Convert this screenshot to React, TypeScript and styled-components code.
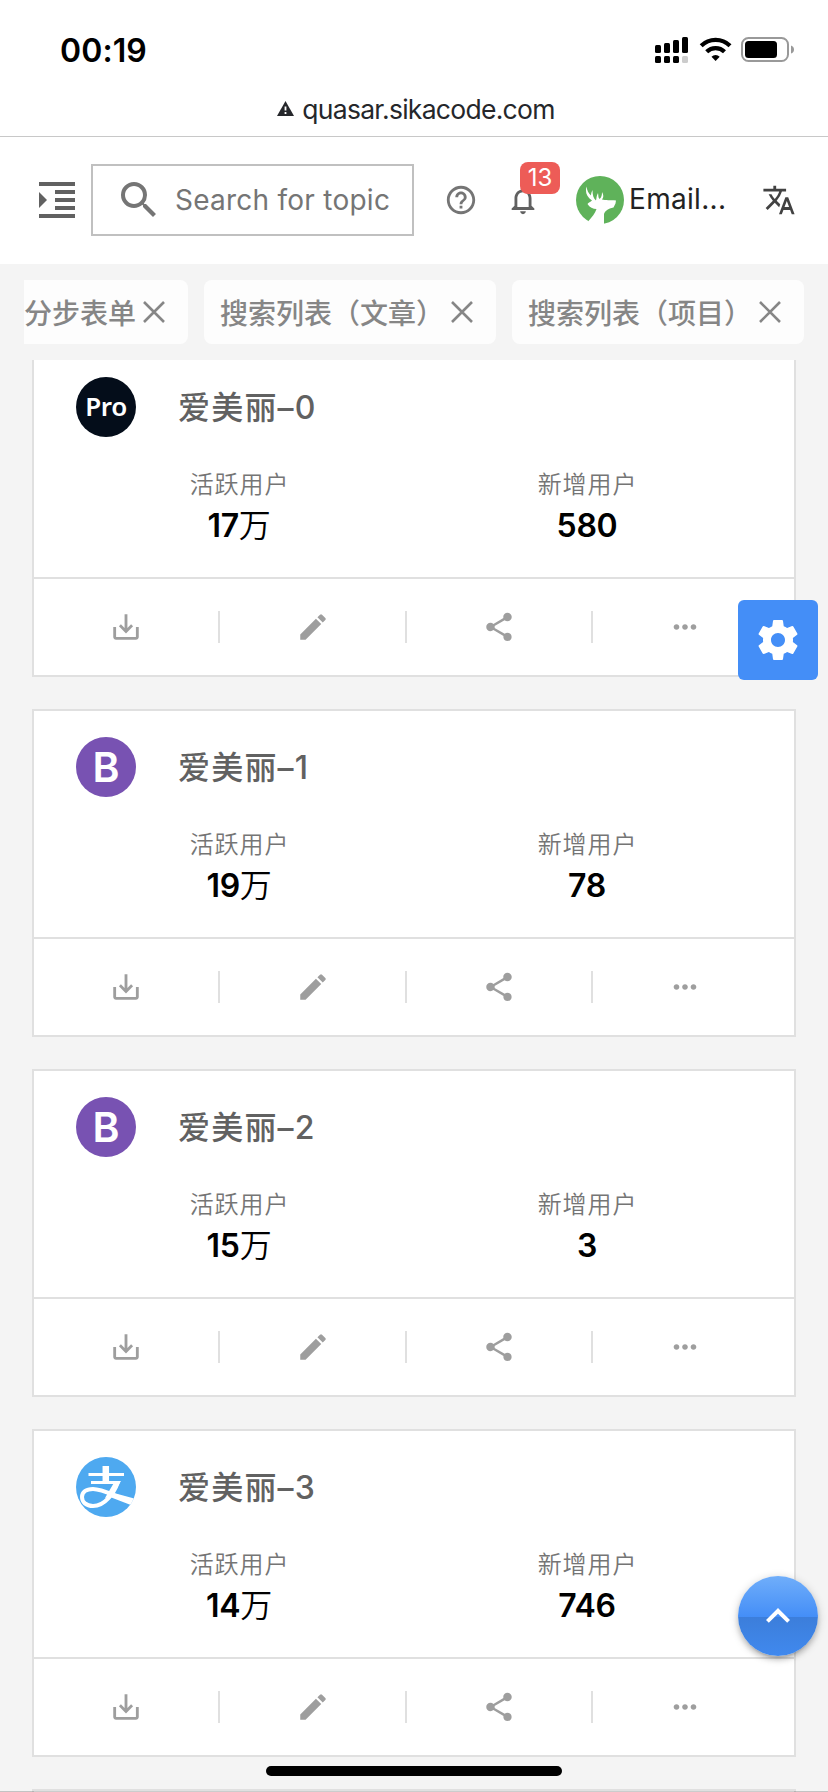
import React from "react";
import styled, { createGlobalStyle } from "styled-components";

const latin = `Inter, "Noto Sans CJK SC", sans-serif`;

const GlobalStyle = createGlobalStyle`
  * { box-sizing: border-box; }
  body { margin: 0; background: #f4f4f4; font-family: ${latin}; }
`;

const Screen = styled.div`
  position: relative;
  width: 828px;
  height: 1792px;
  overflow: hidden;
  display: flex;
  flex-direction: column;
  background: #f4f4f4;
`;

const BrowserTop = styled.header`
  flex: none;
  height: 137px;
  background: #fff;
  border-bottom: 1px solid #c8c8c8;
`;

const StatusBar = styled.div`
  height: 88px;
  display: flex;
  align-items: center;
  justify-content: space-between;
  padding: 12px 33px 0 60px;
`;

const Clock = styled.div`
  padding-top: 1px;
  font-size: 32px;
  line-height: 40px;
  font-weight: 600;
  letter-spacing: 0.1px;
`;

const StatusIcons = styled.svg`
  display: block;
  width: 140px;
  height: 26px;
`;

const Address = styled.div`
  height: 41px;
  display: flex;
  align-items: center;
  justify-content: center;
  gap: 8px;
  padding-left: 4px;
  color: #25272b;
  font-size: 26.5px;
  letter-spacing: -0.72px;
`;

const Toolbar = styled.nav`
  flex: none;
  height: 127px;
  display: flex;
  align-items: center;
  padding: 0 0 1px 33px;
  background: #fff;
`;

const Icon = styled.svg<{ $size: number; $color: string }>`
  display: block;
  flex: none;
  width: ${(p) => p.$size}px;
  height: ${(p) => p.$size}px;
  fill: ${(p) => p.$color};
`;

const SearchBox = styled.div`
  flex: none;
  width: 323px;
  height: 72px;
  margin-left: 10px;
  padding-left: 22px;
  display: flex;
  align-items: center;
  gap: 12px;
  border: 2px solid #c0c0c0;
  color: #757575;
  font-size: 28px;
  letter-spacing: 0.25px;
  white-space: nowrap;
`;

const HelpButton = styled.div`
  margin-left: 30px;
`;

const BellButton = styled.div`
  position: relative;
  margin-left: 28px;
`;

const Badge = styled.span`
  position: absolute;
  left: 14px;
  top: -21px;
  width: 40px;
  height: 32px;
  border-radius: 8px;
  background: #ed5c57;
  color: #fff;
  font-size: 24px;
  line-height: 32px;
  text-align: center;
`;

const Account = styled.div`
  display: flex;
  align-items: center;
  gap: 5px;
  width: 186px;
  margin-left: 36px;
  color: #222;
  font-size: 28px;
  letter-spacing: 0.3px;
`;

const AccountName = styled.span`
  padding-bottom: 2px;
`;

const TabStrip = styled.div`
  flex: none;
  height: 96px;
  margin: 0 24px;
  padding: 16px 0;
  display: flex;
  justify-content: flex-end;
  gap: 16px;
  overflow: hidden;
`;

const Tab = styled.div<{ $width: number; $cut?: boolean }>`
  flex: none;
  width: ${(p) => p.$width}px;
  display: flex;
  align-items: center;
  justify-content: space-between;
  padding: ${(p) => (p.$cut ? "0 17px 0 0" : "0 17px 0 16px")};
  border-radius: ${(p) => (p.$cut ? "0 8px 8px 0" : "8px")};
  background: #fdfdfd;
  color: #868686;
  font-size: 28px;
  line-height: 62px;
  font-weight: 500;
  font-family: "Noto Sans CJK SC", sans-serif;
  white-space: nowrap;
`;

const CardList = styled.main`
  flex: 1;
  min-height: 0;
  overflow: hidden;
  padding: 0 32px;
`;

const Cards = styled.div`
  display: flex;
  flex-direction: column;
  gap: 32px;
  margin-top: -11px;
`;

const Card = styled.article`
  flex: none;
  height: 328px;
  border: 2px solid #e0e0e0;
  background: #fff;
`;

const CardBody = styled.div`
  height: 228px;
  padding-top: 26px;
  border-bottom: 2px solid #e0e0e0;
`;

const CardHead = styled.div`
  display: flex;
  align-items: center;
  height: 60px;
  gap: 42px;
  padding-left: 42px;
`;

const Title = styled.h2`
  margin: 0;
  padding-top: 1px;
  color: #616161;
  font-size: 32px;
  line-height: 60px;
  font-weight: 550;
  letter-spacing: 1.2px;
`;

const Logo = styled.div<{ $bg: string }>`
  width: 60px;
  height: 60px;
  border-radius: 50%;
  overflow: hidden;
  background: ${(p) => p.$bg};
  color: #fff;
  line-height: 60px;
  text-align: center;
`;

const ProLogo = styled(Logo)`
  font-family: "Noto Sans", sans-serif;
  font-size: 26px;
  font-weight: 600;
  letter-spacing: -0.4px;
  line-height: 58px;
`;

const BootstrapLogo = styled(Logo)`
  font-size: 41px;
  font-weight: 600;
`;

const Stats = styled.div`
  display: grid;
  grid-template-columns: 1fr 1fr;
  padding: 30px 32px 0;
  text-align: center;
`;

const StatLabel = styled.div`
  color: #757575;
  font-size: 24px;
  line-height: 36px;
  font-weight: 350;
  letter-spacing: 0.9px;
  padding-right: 1px;
`;

const StatValue = styled.div`
  color: #000;
  font-size: 32px;
  line-height: 46px;
  font-weight: 600;
  letter-spacing: -0.3px;
  padding-right: 2px;
`;

const Unit = styled.span`
  font-weight: 350;
`;

const Actions = styled.div`
  display: flex;
  align-items: center;
  height: 96px;
`;

const Action = styled.div`
  flex: none;
  width: 186.4px;
  height: 32px;
  display: flex;
  align-items: center;
  justify-content: center;
  border-right: 2px solid #e0e0e0;
  &:last-child { border-right-color: transparent; }
`;

const SettingsButton = styled.button`
  position: absolute;
  left: 738px;
  top: 600px;
  width: 80px;
  height: 80px;
  display: flex;
  align-items: center;
  justify-content: center;
  border: 0;
  padding: 0;
  border-radius: 6px;
  background: #448ef7;
`;

const TopButton = styled.button`
  position: absolute;
  left: 738px;
  top: 1576px;
  width: 80px;
  height: 80px;
  display: flex;
  align-items: center;
  justify-content: center;
  border: 0;
  padding: 0;
  border-radius: 50%;
  background: linear-gradient(#70aefa 0, #448ef7 41px, #3c7edb 41px, #4089ee 80px);
  box-shadow: 0 2px 10px rgba(0, 0, 0, 0.2), 0 4px 5px rgba(0, 0, 0, 0.14), 0 6px 2px -4px rgba(0, 0, 0, 0.12);
`;

const HomeIndicator = styled.div`
  position: absolute;
  left: 266px;
  top: 1766px;
  width: 296px;
  height: 10px;
  border-radius: 5px;
  background: #000;
`;

const BottomEdge = styled.div`
  position: absolute;
  left: 0;
  right: 0;
  bottom: 0;
  height: 1px;
  background: rgba(0, 0, 0, 0.2);
`;

const paths = {
  indent: "M3 21h18v-2H3v2zM3 8v8l4-4-4-4zm8 9h10v-2H11v2zM3 3v2h18V3H3zm8 6h10V7H11v2zm0 4h10v-2H11v2z",
  search: "M15.5 14h-.79l-.28-.27A6.471 6.471 0 0 0 16 9.5 6.5 6.5 0 1 0 9.5 16c1.61 0 3.09-.59 4.23-1.57l.27.28v.79l5 4.99L20.49 19l-4.99-5zm-6 0C7.01 14 5 11.99 5 9.5S7.01 5 9.5 5 14 7.01 14 9.5 11.99 14 9.5 14z",
  help: "M11 18h2v-2h-2v2zm1-16C6.48 2 2 6.48 2 12s4.48 10 10 10 10-4.48 10-10S17.52 2 12 2zm0 18c-4.41 0-8-3.59-8-8s3.59-8 8-8 8 3.59 8 8-3.59 8-8 8zm0-14c-2.21 0-4 1.79-4 4h2c0-1.1.9-2 2-2s2 .9 2 2c0 2-3 1.75-3 5h2c0-2.25 3-2.5 3-5 0-2.21-1.79-4-4-4z",
  bell: "M12 22c1.1 0 2-.9 2-2h-4c0 1.1.9 2 2 2zm6-6v-5c0-3.07-1.63-5.64-4.5-6.32V4c0-.83-.67-1.5-1.5-1.5s-1.5.67-1.5 1.5v.68C7.64 5.36 6 7.92 6 11v5l-2 2v1h16v-1l-2-2zm-2 1H8v-6c0-2.48 1.51-4.5 4-4.5s4 2.02 4 4.5v6z",
  translate: "M12.87 15.07l-2.54-2.51.03-.03A17.52 17.52 0 0 0 14.07 6H17V4h-7V2H8v2H1v1.99h11.17C11.5 7.92 10.44 9.75 9 11.35 8.07 10.32 7.3 9.19 6.69 8h-2c.73 1.63 1.73 3.17 2.98 4.56l-5.09 5.02L4 19l5-5 3.11 3.11.76-2.04zM18.5 10h-2L12 22h2l1.12-3h4.75L21 22h2l-4.5-12zm-2.62 7l1.62-4.33L19.12 17h-3.24z",
  download: "M19 12v7H5v-7H3v7c0 1.1.9 2 2 2h14c1.1 0 2-.9 2-2v-7h-2zm-6 .67l2.59-2.58L17 11.5l-5 5-5-5 1.41-1.41L11 12.67V3h2z",
  edit: "M3 17.25V21h3.75L17.81 9.94l-3.75-3.75L3 17.25zM20.71 7.04a.996.996 0 0 0 0-1.41l-2.34-2.34a.996.996 0 0 0-1.41 0l-1.83 1.83 3.75 3.75 1.83-1.83z",
  share: "M18 16.08c-.76 0-1.44.3-1.96.77L8.91 12.7c.05-.23.09-.46.09-.7s-.04-.47-.09-.7l7.05-4.11c.54.5 1.25.81 2.04.81 1.66 0 3-1.34 3-3s-1.34-3-3-3-3 1.34-3 3c0 .24.04.47.09.7L8.04 9.81C7.5 9.31 6.79 9 6 9c-1.66 0-3 1.34-3 3s1.34 3 3 3c.79 0 1.5-.31 2.04-.81l7.12 4.16c-.05.21-.08.43-.08.65 0 1.61 1.31 2.92 2.92 2.92s2.92-1.31 2.92-2.92-1.31-2.92-2.92-2.92z",
  more: "M6 10c-1.1 0-2 .9-2 2s.9 2 2 2 2-.9 2-2-.9-2-2-2zm12 0c-1.1 0-2 .9-2 2s.9 2 2 2 2-.9 2-2-.9-2-2-2zm-6 0c-1.1 0-2 .9-2 2s.9 2 2 2 2-.9 2-2-.9-2-2-2z",
  settings: "M19.43 12.98c.04-.32.07-.64.07-.98s-.03-.66-.07-.98l2.11-1.65c.19-.15.24-.42.12-.64l-2-3.46c-.12-.22-.39-.3-.61-.22l-2.49 1c-.52-.4-1.08-.73-1.69-.98l-.38-2.65C14.46 2.18 14.25 2 14 2h-4c-.25 0-.46.18-.49.42l-.38 2.65c-.61.25-1.17.59-1.69.98l-2.49-1c-.23-.09-.49 0-.61.22l-2 3.46c-.13.22-.07.49.12.64l2.11 1.65c-.04.32-.07.65-.07.98s.03.66.07.98l-2.11 1.65c-.19.15-.24.42-.12.64l2 3.46c.12.22.39.3.61.22l2.49-1c.52.4 1.08.73 1.69.98l.38 2.65c.03.24.24.42.49.42h4c.25 0 .46-.18.49-.42l.38-2.65c.61-.25 1.17-.59 1.69-.98l2.49 1c.23.09.49 0 .61-.22l2-3.46c.12-.22.07-.49-.12-.64l-2.11-1.65zM12 15.5c-1.93 0-3.5-1.57-3.5-3.5s1.57-3.5 3.5-3.5 3.5 1.57 3.5 3.5-1.57 3.5-3.5 3.5z",
  up: "M7.41 15.41L12 10.83l4.59 4.58L18 14l-6-6-6 6z",
};

const Glyph = ({ name, size = 34, color = "#9e9e9e" }: { name: keyof typeof paths; size?: number; color?: string }) => (
  <Icon viewBox="0 0 24 24" $size={size} $color={color}>
    <path d={paths[name]} />
  </Icon>
);

const Close = () => (
  <Icon viewBox="0 0 34 34" $size={34} $color="none">
    <path d="M7 7L27 27M27 7L7 27" stroke="#868686" strokeWidth="2.6" />
  </Icon>
);

const Deer = () => (
  <Icon viewBox="0 0 48 48" $size={48} $color="#5fb25a">
    <circle cx="24" cy="24" r="24" />
    <path
      fill="#fff"
      d="M10.500 10.500C9 16 10.500 21 16 24.500C14.500 26 12.500 26.500 11.500 28C13.500 31.500 17 33 20.500 33C19 37.500 16 41 12.500 45L14 49H28V38C29 35 32 32.500 37.500 31.500L39.500 27.500L40 24.500C35 24 29 24.500 26 23.500C28 21 27.500 18.500 26 16C26 19 25.500 21.500 23.500 23C22 21.500 22.500 19 22 17C20.500 19.500 20.500 22 20 24.500C17.500 22.500 16.500 19 16.500 14C15.500 16 15 17.500 15 19.500C12.500 17.500 11 14.500 10.500 10.500Z"
    />
  </Icon>
);

const Alipay = () => (
  <Icon viewBox="0 0 60 60" $size={60} $color="none">
    <g stroke="#fff">
      <path d="M12.500 17.500H48" strokeWidth="2.800" />
      <path d="M29.800 9V25" strokeWidth="6.500" />
      <path d="M15 25.500H43" strokeWidth="3" />
      <path d="M42 25C38 36 29 49 17 49C10 49 6 45 6 40C6 35 10 32 17 32C27 32 38 39 56 45" strokeWidth="4" />
    </g>
    <path fill="#fff" d="M39 24H45L38 36L60 42V50L34 40L29 41Z" />
  </Icon>
);

type LogoKind = "pro" | "bootstrap" | "alipay";

const CardLogo = ({ kind }: { kind: LogoKind }) => {
  if (kind === "pro") return <ProLogo $bg="#040d1a">Pro</ProLogo>;
  if (kind === "bootstrap") return <BootstrapLogo $bg="#7852b2">B</BootstrapLogo>;
  return <Logo $bg="#4ea9f0"><Alipay /></Logo>;
};

const items: { logo: LogoKind; active: number; added: number }[] = [
  { logo: "pro", active: 17, added: 580 },
  { logo: "bootstrap", active: 19, added: 78 },
  { logo: "bootstrap", active: 15, added: 3 },
  { logo: "alipay", active: 14, added: 746 },
];

const actionIcons: (keyof typeof paths)[] = ["download", "edit", "share", "more"];

export default function App() {
  return (
    <Screen>
      <GlobalStyle />
      <BrowserTop>
        <StatusBar>
          <Clock>00:19</Clock>
          <StatusIcons viewBox="0 0 140 26">
            <rect x="0" y="8" width="6" height="8" rx="1.500" />
            <rect x="9" y="6" width="6" height="10" rx="1.500" />
            <rect x="18" y="3" width="6" height="13" rx="1.500" />
            <rect x="27" y="0" width="6" height="16" rx="1.500" />
            <rect x="0" y="19" width="6" height="7" rx="1.500" />
            <rect x="9" y="19" width="6" height="7" rx="1.500" />
            <rect x="18" y="19" width="6" height="7" rx="1.500" />
            <rect x="27" y="19" width="6" height="7" rx="1.500" fill="#ccc" />
            <g fill="none" stroke="#000" strokeWidth="4.200">
              <path d="M46.200 8.800A20.500 20.500 0 0 1 75 8.800" />
              <path d="M51.700 14.800A12.600 12.600 0 0 1 69.500 14.800" />
            </g>
            <path d="M60.600 24L56.500 19.800A5.800 5.800 0 0 1 64.700 19.800Z" />
            <rect x="87" y="1" width="46" height="23" rx="6.500" fill="none" stroke="#999" strokeWidth="2" />
            <rect x="90" y="4" width="32" height="17" rx="3.500" />
            <path d="M136 8.500Q139 9.500 139 12.500T136 16.500Z" fill="#999" />
          </StatusIcons>
        </StatusBar>
        <Address>
          <svg width="17" height="15" viewBox="0 0 17 15">
            <path d="M8.500 0L17 15H0Z" fill="#25272b" />
            <path d="M8.500 5.500V9.500M8.500 11V13" stroke="#fff" strokeWidth="1.800" />
          </svg>
          <span>quasar.sikacode.com</span>
        </Address>
      </BrowserTop>

      <Toolbar>
        <Glyph name="indent" size={48} color="#616161" />
        <SearchBox>
          <Glyph name="search" size={48} color="#757575" />
          <span>Search for topic</span>
        </SearchBox>
        <HelpButton><Glyph name="help" color="#757575" /></HelpButton>
        <BellButton>
          <Glyph name="bell" color="#616161" />
          <Badge>13</Badge>
        </BellButton>
        <Account>
          <Deer />
          <AccountName>Email...</AccountName>
        </Account>
        <Glyph name="translate" color="#424242" />
      </Toolbar>

      <TabStrip>
        <Tab $width={164} $cut><span>分步表单</span><Close /></Tab>
        <Tab $width={292}><span>搜索列表（文章）</span><Close /></Tab>
        <Tab $width={292}><span>搜索列表（项目）</span><Close /></Tab>
      </TabStrip>

      <CardList>
        <Cards>
          {items.map((item, i) => (
            <Card key={i}>
              <CardBody>
                <CardHead>
                  <CardLogo kind={item.logo} />
                  <Title>爱美丽–{i}</Title>
                </CardHead>
                <Stats>
                  <div>
                    <StatLabel>活跃用户</StatLabel>
                    <StatValue>{item.active}<Unit>万</Unit></StatValue>
                  </div>
                  <div>
                    <StatLabel>新增用户</StatLabel>
                    <StatValue>{item.added}</StatValue>
                  </div>
                </Stats>
              </CardBody>
              <Actions>
                {actionIcons.map((name) => (
                  <Action key={name}><Glyph name={name} /></Action>
                ))}
              </Actions>
            </Card>
          ))}
          <Card />
        </Cards>
      </CardList>

      <SettingsButton aria-label="settings"><Glyph name="settings" size={48} color="#fff" /></SettingsButton>
      <TopButton aria-label="top"><Glyph name="up" size={48} color="#fff" /></TopButton>
      <HomeIndicator />
      <BottomEdge />
    </Screen>
  );
}
